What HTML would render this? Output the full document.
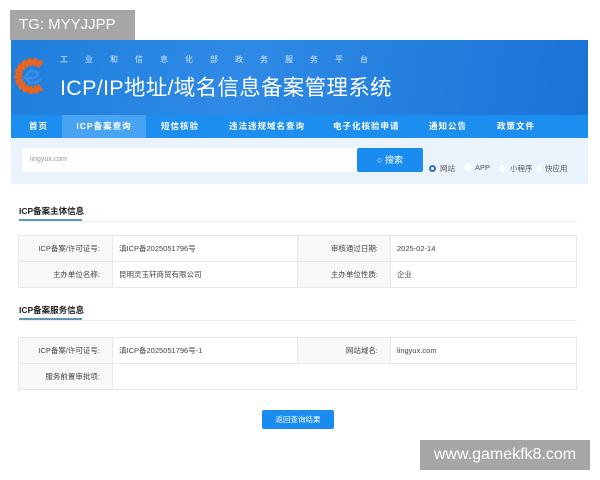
<!DOCTYPE html>
<html><head><meta charset="utf-8">
<style>
*{margin:0;padding:0;box-sizing:border-box}
body{width:600px;height:480px;background:#fff;position:relative;overflow:hidden;font-family:"Liberation Sans","Noto Sans CJK SC",sans-serif;color:#333}
.abs{position:absolute}
#tg{left:10px;top:10px;width:125px;height:30px;background:#a6a6a6;color:#fff;font-size:15px;line-height:30px;padding-left:9px}
#hdr{left:11px;top:40px;width:577px;height:75px;background:linear-gradient(100deg,#1f7fdc 0%,#2f8ae6 40%,#1a73d6 100%)}
#sub{left:60px;top:54px;color:#dbeaff;font-size:8px;letter-spacing:17px;white-space:nowrap}
#title{left:60px;top:71px;color:#fff;font-size:21.5px;white-space:nowrap;letter-spacing:0.3px}
#nav{left:11px;top:115px;width:577px;height:23px;background:#1c8ef0;color:#fff;font-size:8.5px;font-weight:bold;letter-spacing:1px}
#nav span{position:absolute;top:0;line-height:23px}
#srch{left:11px;top:138px;width:577px;height:46px;background:#eaf3fc}
#inp{left:22px;top:148px;width:336px;height:24px;background:#fff;font-size:7px;color:#999;line-height:24px;padding-left:8px}
#btn{left:357px;top:148px;width:66px;height:24px;background:#1a8cf0;color:#fff;font-size:9px;line-height:24px;text-align:center;border-radius:2px}
.rad{font-size:7.5px;color:#555;top:163px;white-space:nowrap}
.dot{display:inline-block;width:7px;height:7px;border-radius:50%;background:#fff;vertical-align:-1px;margin-right:4px}
.h2{left:19px;font-size:8.5px;font-weight:bold;color:#222}
.ul{left:19px;width:63px;height:2px;background:#5f97b8}
.hl{left:19px;width:558px;height:1px;background:#eceef0}
table{position:absolute;left:18px;width:559px;border-collapse:collapse;font-size:7.5px;color:#444}
td{border:1px solid #e6e9ec;height:26px;padding:0 6px}
td.l{background:#f6f8fa;text-align:right;width:94px;padding-right:12px}
td.v{width:185px}
td.l2{background:#f6f8fa;text-align:right;width:93px;padding-right:12px}
#back{left:262px;top:410px;width:72px;height:19px;background:#1a8cf0;color:#fff;font-size:7.5px;text-align:center;line-height:19px;border-radius:2px}
#wm{left:420px;top:440px;width:170px;height:30px;background:#a6a6a6;color:#fff;font-size:16px;line-height:30px;text-align:center}
</style></head><body>
<div id="tg" class="abs">TG: MYYJJPP</div>
<div id="hdr" class="abs"></div>
<svg class="abs" style="left:12px;top:56px" width="36" height="40" viewBox="0 0 36 40">
<path d="M29 9 A14 14 0 1 0 29 31" fill="none" stroke="#e8641f" stroke-width="8" stroke-dasharray="3.5 1.5"/>
<path d="M29 9 A14 14 0 1 0 29 31" fill="none" stroke="#e8641f" stroke-width="5"/>
<path d="M11 21 C14 23 22 23 26 19 C25 15 20 14 17 16 C13 19 14 26 20 27 C24 27 27 25 29 23" fill="none" stroke="#3a8ee8" stroke-width="2.5"/>
</svg>
<div id="sub" class="abs">工业和信息化部政务服务平台</div>
<div id="title" class="abs">ICP/IP地址/域名信息备案管理系统</div>
<div id="nav" class="abs">
<span style="left:18px">首页</span>
<span style="left:51px;width:84px;background:#48a4f2;top:0;height:23px;text-align:center">ICP备案查询</span>
<span style="left:150px">短信核验</span>
<span style="left:218px">违法违规域名查询</span>
<span style="left:322px">电子化核验申请</span>
<span style="left:418px">通知公告</span>
<span style="left:486px">政策文件</span>
</div>
<div id="srch" class="abs"></div>
<div id="inp" class="abs">lingyux.com</div>
<div id="btn" class="abs">○ 搜索</div>
<div class="abs rad" style="left:429px"><span class="dot" style="border:2px solid #2a6fc9"></span>网站</div>
<div class="abs rad" style="left:464px"><span class="dot"></span>APP</div>
<div class="abs rad" style="left:499px"><span class="dot"></span>小程序</div>
<div class="abs rad" style="left:537px"><span class="dot" style="width:4px"></span>快应用</div>

<div class="abs h2" style="top:205px">ICP备案主体信息</div>
<div class="abs ul" style="top:219px"></div>
<div class="abs hl" style="top:221px"></div>
<table style="top:235px">
<tr><td class="l">ICP备案/许可证号:</td><td class="v">滇ICP备2025051796号</td><td class="l2">审核通过日期:</td><td>2025-02-14</td></tr>
<tr><td class="l">主办单位名称:</td><td class="v">昆明灵玉轩商贸有限公司</td><td class="l2">主办单位性质:</td><td>企业</td></tr>
</table>
<div class="abs h2" style="top:304px">ICP备案服务信息</div>
<div class="abs ul" style="top:318px"></div>
<div class="abs hl" style="top:320px"></div>
<table style="top:337px">
<tr><td class="l">ICP备案/许可证号:</td><td class="v">滇ICP备2025051796号-1</td><td class="l2">网站域名:</td><td>lingyux.com</td></tr>
<tr><td class="l">服务前置审批项:</td><td colspan="3"></td></tr>
</table>
<div id="back" class="abs">返回查询结果</div>
<div id="wm" class="abs">www.gamekfk8.com</div>
</body></html>
